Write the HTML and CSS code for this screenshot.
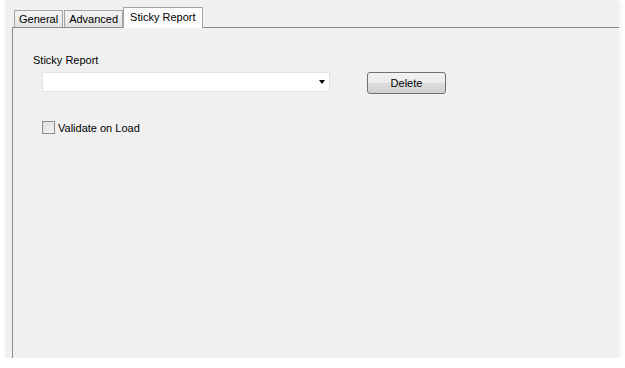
FILE: index.html
```html
<!DOCTYPE html>
<html lang="en">
<head>
  <meta charset="UTF-8" />
  <title>Sticky Report</title>
  <link rel="stylesheet" href="styles.css">
</head>
<body>
  <div class="window">
    <div class="tabs">
      <div class="tab">General</div>
      <div class="tab">Advanced</div>
      <div class="tab tab-active">Sticky Report</div>
    </div>
    <div class="panel">
      <div class="field-label">Sticky Report</div>
      <div class="row">
        <div class="select">
          <span class="arrow"></span>
        </div>
        <button class="btn">Delete</button>
      </div>
      <label class="check">
        <span class="box"></span>
        <span>Validate on Load</span>
      </label>
    </div>
  </div>
</body>
</html>
```

FILE: styles.css
```css
body {
  margin: 0;
  background: #fff;
  font-family: "Liberation Sans", Arial, sans-serif;
  font-size: 11px;
  color: #000;
}
.window {
  margin-left: 5px;
  width: 614px;
  height: 358px;
  background: #f0f0f0;
  padding-left: 7px;
  box-sizing: border-box;
  display: flex;
  flex-direction: column;
  box-shadow: 2px 2px 5px rgba(0, 0, 0, 0.06);
}
.tabs {
  display: flex;
  align-items: flex-end;
  height: 27px;
  padding-left: 2px;
}
.tab {
  height: 16px;
  line-height: 16px;
  padding: 0 4px;
  border: 1px solid #a4a4a8;
  border-bottom: none;
  background: linear-gradient(#f4f4f4, #e2e2e2);
  margin-right: 1px;
  white-space: nowrap;
}
.tab-active {
  height: 20px;
  line-height: 18px;
  padding: 0 6px;
  margin-left: -1px;
  margin-bottom: -1px;
  background: #fcfcfc;
  position: relative;
  z-index: 1;
}
.panel {
  flex: 1;
  border-top: 1px solid #8c8c94;
  border-left: 1px solid #8c8c94;
  padding: 25px 0 0 20px;
}
.field-label {
  height: 14px;
  line-height: 14px;
}
.row {
  display: flex;
  align-items: flex-start;
  margin-top: 5px;
  padding-left: 9px;
}
.select {
  width: 286px;
  height: 18px;
  background: #fff;
  border: 1px solid #e2e2e2;
  position: relative;
}
.arrow {
  position: absolute;
  right: 4px;
  top: 7px;
  border-left: 3px solid transparent;
  border-right: 3px solid transparent;
  border-top: 4px solid #000;
}
.btn {
  margin-left: 37px;
  width: 79px;
  height: 22px;
  border: 1px solid #707070;
  border-radius: 3px;
  background: linear-gradient(#f2f2f2 0%, #ebebeb 50%, #dddddd 51%, #cfcfcf 100%);
  font-family: inherit;
  font-size: 11px;
  padding: 0;
}
.check {
  display: flex;
  align-items: center;
  margin-top: 27px;
  padding-left: 9px;
  gap: 3px;
}
.box {
  width: 11px;
  height: 11px;
  border: 1px solid #8f8f8f;
  background: linear-gradient(135deg, #dcdcdc, #f6f6f6);
}
```
